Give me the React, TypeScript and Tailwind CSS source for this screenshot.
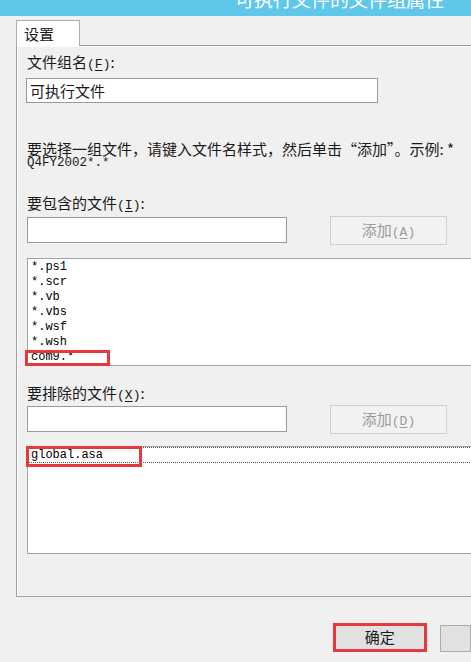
import React from "react";

const cjk = "font-['Microsoft_YaHei','Noto_Sans_CJK_SC',sans-serif]";
const mono = "font-['Liberation_Mono','Noto_Sans_CJK_SC',monospace]";

function Key({ k }: { k: string }) {
  return (
    <span className={mono + " text-[13px] leading-none"}>
      (<span className="underline underline-offset-2">{k}</span>)
    </span>
  );
}

function AddButton({ k }: { k: string }) {
  return (
    <button
      disabled
      className={`w-[117px] h-[29px] border border-[#cfcfcf] bg-[#f2f2f2] text-[15px] leading-none text-[#9a9a9a] ${cjk}`}
    >
      添加<Key k={k} />
    </button>
  );
}

export default function App() {
  const includes = ["*.ps1", "*.scr", "*.vb", "*.vbs", "*.wsf", "*.wsh", "com9.*"];

  return (
    <div className={`w-[471px] h-[662px] overflow-hidden bg-[#f0f0f0] text-[#1a1a1a] ${cjk}`}>
      {/* title bar, cropped */}
      <div className="h-[16px] bg-[#5fc7ea] overflow-hidden">
        <div className="pl-[235px] -mt-[11px] text-[19px] leading-[19px] text-white whitespace-nowrap">
          可执行文件的文件组属性
        </div>
      </div>

      {/* tab */}
      <div className="mt-[4px] ml-[16px] w-[64px] h-[26px] border border-b-0 border-[#adadad] bg-white pl-[7px] pt-[3px] text-[15px] leading-[20px] relative z-10">
        设置
      </div>

      {/* panel */}
      <div className="-mt-px ml-[16px] w-[470px] h-[552px] border border-[#a0a0a0] shadow-[inset_1px_1px_0_#ffffff] pl-[10px] pt-[6px]">
        <div className="h-[20px] text-[15px] leading-[20px]">
          文件组名<Key k="F" />:
        </div>
        <div className="mt-[6px] -ml-px w-[352px] h-[25px] border border-[#9a9a9a] bg-white px-[3px] text-[15px] leading-[23px]">
          可执行文件
        </div>

        <div className="mt-[38px] h-[16px] text-[15px] leading-[16px] whitespace-nowrap">
          要选择一组文件，请键入文件名样式，然后单击“添加”。示例: *
        </div>
        <div className={`${mono} h-[13px] text-[12.5px] leading-[13px]`}>Q4FY2002*.*</div>

        <div className="mt-[23px] h-[20px] text-[15px] leading-[20px]">
          要包含的文件<Key k="I" />:
        </div>
        <div className="mt-[3px] flex items-start gap-[43px]">
          <div className="mt-px w-[260px] h-[26px] border border-[#9a9a9a] bg-white" />
          <AddButton k="A" />
        </div>

        <div className="relative mt-[13px] w-[460px] h-[108px] border border-[#a3a3a3] bg-white pt-px pl-[3px]">
          {includes.map((f) => (
            <div key={f} className={`${mono} h-[15px] text-[12px] leading-[15px] text-black`}>
              {f}
            </div>
          ))}
          <div className="absolute left-[-3px] top-[91px] w-[85px] h-[16px] border-[3px] border-[#e8383d]" />
        </div>

        <div className="mt-[17px] h-[20px] text-[15px] leading-[20px]">
          要排除的文件<Key k="X" />:
        </div>
        <div className="mt-[2px] flex items-start gap-[43px]">
          <div className="mt-px w-[260px] h-[26px] border border-[#9a9a9a] bg-white" />
          <AddButton k="D" />
        </div>

        <div className="relative mt-[12px] w-[460px] h-[108px] border border-[#a3a3a3] bg-white">
          <div className={`${mono} h-[16px] border border-dotted border-[#555] pl-[2px] text-[12px] leading-[14px] text-black`}>
            global.asa
          </div>
          <div className="absolute left-[-2px] top-[-1px] w-[116px] h-[21px] border-[3px] border-[#e8383d]" />
        </div>
      </div>

      {/* buttons */}
      <div className="mt-[26px] flex items-start">
        <div className="ml-[333px] w-[119px] h-[29px] border-[3px] border-[#e8383d] bg-[#e1e1e1] flex items-center justify-center text-[15px]">
          确定
        </div>
        <div className="ml-[13px] mt-[2px] w-[40px] h-[27px] border border-[#adadad] bg-[#e1e1e1]" />
      </div>
    </div>
  );
}
